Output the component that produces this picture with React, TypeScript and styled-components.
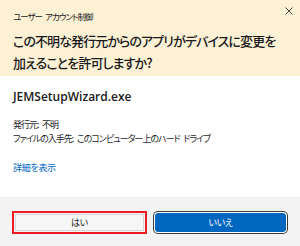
import React from "react";
import styled, { createGlobalStyle } from "styled-components";

const Global = createGlobalStyle`
  html, body { margin: 0; padding: 0; background: #ffffff; }
  body { font-family: "Noto Sans CJK JP", "Noto Sans", sans-serif; }
`;

const Dialog = styled.div`
  width: 300px;
  height: 246px;
  display: flex;
  flex-direction: column;
  background: #ffffff;
  overflow: hidden;
`;

const Header = styled.div`
  height: 76px;
  flex: none;
  box-sizing: border-box;
  background: #fcf0d5;
  padding: 10px 13px 0 13px;
  position: relative;
`;

const Caption = styled.div`
  font-size: 8.5px;
  line-height: 12px;
  letter-spacing: -1px;
  word-spacing: 2px;
  color: #202020;
  font-feature-settings: "palt";
  white-space: pre;
`;

const Close = styled.div`
  position: absolute;
  top: 6px;
  right: 6px;
  width: 10px;
  height: 10px;
  display: flex;
  align-items: center;
  justify-content: center;
`;

const Title = styled.div`
  margin-top: 8px;
  font-size: 13px;
  line-height: 22px;
  letter-spacing: -0.9px;
  color: #1a1a1a;
  font-weight: 500;
  font-feature-settings: "palt";
  white-space: nowrap;
`;

const Body = styled.div`
  flex: 1;
  padding: 13px 13px 0 13px;
  display: flex;
  flex-direction: column;
`;

const FileName = styled.div`
  font-family: "Open Sans", "Noto Sans", sans-serif;
  font-weight: 600;
  font-size: 12px;
  line-height: 16px;
  color: #1a1a1a;
`;

const Info = styled.div`
  margin-top: 13px;
  font-size: 9px;
  line-height: 14px;
  letter-spacing: -1px;
  word-spacing: 2.5px;
  color: #1f1f1f;
  font-feature-settings: "palt";
  white-space: pre;
`;

const Link = styled.div`
  margin-top: 15px;
  font-size: 9px;
  line-height: 14px;
  letter-spacing: -0.3px;
  color: #0066bf;
  font-feature-settings: "palt";
`;

const Footer = styled.div`
  height: 49px;
  flex: none;
  box-sizing: border-box;
  background: #f3f3f3;
  padding: 14px 12px 0 12px;
  display: flex;
  gap: 6px;
`;

const Highlight = styled.div`
  width: 135px;
  height: 23px;
  box-sizing: border-box;
  border: 2px solid #ec1c24;
  padding: 1px;
  display: flex;
`;

const PrimaryWrap = styled.div`
  width: 131px;
  height: 19px;
  margin: 2px 2px 0 2px;
  display: flex;
`;

const Button = styled.div<{ $primary?: boolean }>`
  flex: 1;
  box-sizing: border-box;
  display: flex;
  align-items: center;
  justify-content: center;
  font-size: 9px;
  letter-spacing: -0.3px;
  font-feature-settings: "palt";
  border-radius: 3px;
  ${(p) =>
    p.$primary
      ? `
    background: #0067c0;
    color: #ffffff;
    border: 1px solid #0067c0;
    box-shadow: 0 0 0 1px #ffffff, 0 0 0 2px #3a3a3a;
  `
      : `
    background: #f6f6f6;
    color: #1a1a1a;
    border: 1px solid #d8d8d8;
    border-radius: 0;
  `}
`;

export default function App() {
  return (
    <>
      <Global />
      <Dialog>
        <Header>
          <Caption>ユーザー アカウント制御</Caption>
          <Close>
            <svg width="8" height="8" viewBox="0 0 8 8">
              <path d="M0.5 0.5 L7.5 7.5 M7.5 0.5 L0.5 7.5" stroke="#444" strokeWidth="1" />
            </svg>
          </Close>
          <Title>
            この不明な発行元からのアプリがデバイスに変更を
            <br />
            加えることを許可しますか?
          </Title>
        </Header>
        <Body>
          <FileName>JEMSetupWizard.exe</FileName>
          <Info>
            {"発行元: 不明\nファイルの入手先: このコンピューター上のハード ドライブ"}
          </Info>
          <Link>詳細を表示</Link>
        </Body>
        <Footer>
          <Highlight>
            <Button>はい</Button>
          </Highlight>
          <PrimaryWrap>
            <Button $primary>いいえ</Button>
          </PrimaryWrap>
        </Footer>
      </Dialog>
    </>
  );
}
